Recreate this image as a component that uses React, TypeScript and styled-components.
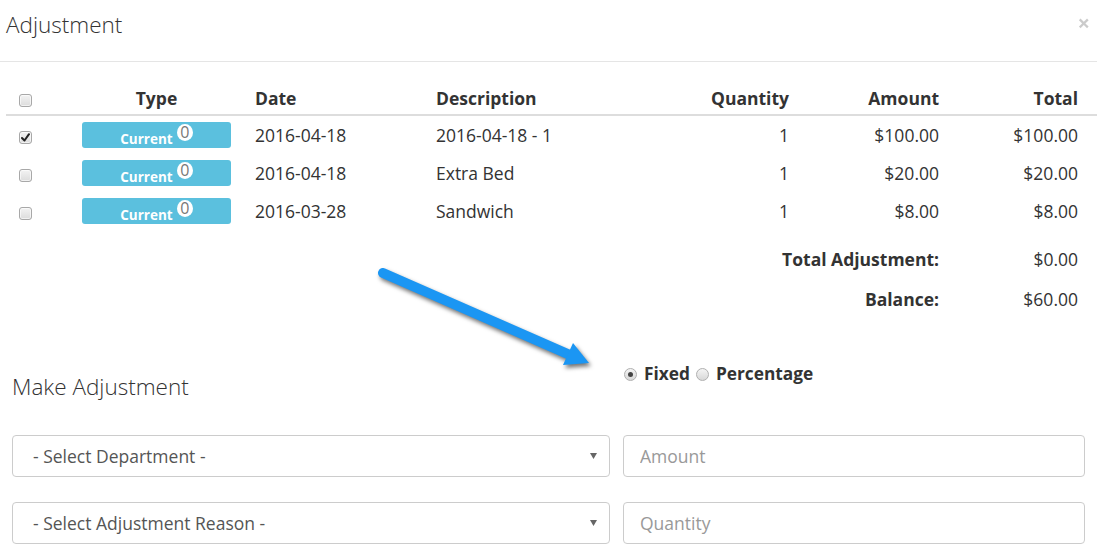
import React from "react";
import styled, { createGlobalStyle } from "styled-components";

const GlobalStyle = createGlobalStyle`
  html, body {
    margin: 0;
    padding: 0;
    background: #fff;
  }
  body {
    font-family: "Open Sans", "Liberation Sans", sans-serif;
    color: #333;
    font-size: 17.5px;
  }
  * { box-sizing: border-box; }
`;

const Page = styled.div`
  position: relative;
  width: 1097px;
  height: 553px;
  overflow: hidden;
`;

const Header = styled.div`
  height: 62px;
  border-bottom: 1px solid #e5e5e5;
  display: flex;
  align-items: flex-start;
  justify-content: space-between;
  padding: 10px 7px 0 6px;
`;

const Title = styled.h4`
  margin: 0;
  font-weight: 300;
  font-size: 22.5px;
  line-height: 30px;
  color: #333;
`;

const Close = styled.button`
  border: 0;
  background: transparent;
  padding: 0;
  margin-top: 1px;
  font-family: "Open Sans", "Liberation Sans", sans-serif;
  font-size: 22px;
  font-weight: 700;
  line-height: 22px;
  color: #000;
  opacity: 0.2;
  cursor: pointer;
`;

const Table = styled.table`
  margin: 19px 0 0 6px;
  width: 1091px;
  table-layout: fixed;
  border-collapse: collapse;
`;

type Align = "left" | "right" | "center";

const Th = styled.th<{ $align?: Align; $pl?: number; $pr?: number }>`
  padding: 6px ${(p) => p.$pr ?? 8}px 5px ${(p) => p.$pl ?? 8}px;
  line-height: 22px;
  font-size: 17.5px;
  font-weight: 700;
  text-align: ${(p) => p.$align ?? "left"};
  border-bottom: 2px solid #ddd;
  vertical-align: middle;
  color: #333;
  white-space: nowrap;
`;

const Td = styled.td<{ $align?: Align; $pl?: number; $pr?: number; $bold?: boolean; $pt?: number }>`
  padding: ${(p) => p.$pt ?? 6}px ${(p) => p.$pr ?? 8}px 6px ${(p) => p.$pl ?? 8}px;
  height: 38px;
  line-height: 26px;
  font-size: 17.5px;
  font-weight: ${(p) => (p.$bold ? 700 : 400)};
  text-align: ${(p) => p.$align ?? "left"};
  vertical-align: middle;
  color: #333;
  white-space: nowrap;
`;

const FootTd = styled(Td)`
  height: auto;
  line-height: 22px;
  padding-bottom: 9px;
`;

const CheckBox = styled.span<{ $checked?: boolean }>`
  display: inline-flex;
  align-items: center;
  justify-content: center;
  width: 13px;
  height: 13px;
  border: 1px solid #a8a8a8;
  border-radius: 3px;
  background: linear-gradient(#f3f3f3, #dcdcdc);
  vertical-align: middle;
  box-shadow: inset 0 0 0 1px rgba(255, 255, 255, 0.6);
`;

const Badge = styled.span`
  display: flex;
  align-items: center;
  justify-content: center;
  gap: 4px;
  width: 149px;
  height: 26px;
  background: #5bc0de;
  border-radius: 3px;
  color: #fff;
`;

const BadgeLabel = styled.span`
  font-size: 13.5px;
  font-weight: 700;
  line-height: 16px;
  margin-top: 7px;
`;

const Counter = styled.span`
  display: inline-flex;
  align-items: center;
  justify-content: center;
  width: 16px;
  height: 17px;
  border-radius: 50%;
  background: #fff;
  color: #777;
  font-size: 16px;
  line-height: 17px;
  margin-top: -5px;
`;

const Section = styled.div`
  display: grid;
  grid-template-columns: 598px 462px;
  column-gap: 13px;
  padding-left: 12px;
`;

const TopRow = styled(Section)`
  margin-top: 43px;
  align-items: start;
`;

const FieldRows = styled(Section)`
  margin-top: 33px;
  row-gap: 25px;
`;

const SubTitle = styled.h4`
  margin: 10px 0 0;
  font-weight: 300;
  font-size: 22.5px;
  line-height: 30px;
  color: #333;
`;

const RadioGroup = styled.div`
  display: flex;
  align-items: center;
  height: 24px;
  padding-left: 1px;
`;

const RadioLabel = styled.label`
  display: inline-flex;
  align-items: center;
  gap: 7px;
  margin-right: 6px;
  font-size: 17.3px;
  font-weight: 700;
  line-height: 24px;
  color: #333;
`;

const RadioDot = styled.span<{ $checked?: boolean }>`
  display: inline-flex;
  align-items: center;
  justify-content: center;
  width: 13px;
  height: 13px;
  border-radius: 50%;
  border: 1px solid #b0b0b0;
  background: linear-gradient(#f4f4f4, #d8d8d8);
  &::after {
    content: "";
    display: ${(p) => (p.$checked ? "block" : "none")};
    width: 5px;
    height: 5px;
    border-radius: 50%;
    background: #444;
  }
`;

const SelectBox = styled.div`
  display: flex;
  align-items: center;
  justify-content: space-between;
  height: 42px;
  border: 1px solid #ccc;
  border-radius: 4px;
  padding: 0 12px 0 20px;
  font-size: 17.5px;
  color: #555;
  background: #fff;
`;

const Input = styled.input`
  height: 42px;
  width: 100%;
  border: 1px solid #ccc;
  border-radius: 4px;
  padding: 0 16px;
  font-family: "Open Sans", "Liberation Sans", sans-serif;
  font-size: 17.5px;
  color: #555;
  outline: none;
  &::placeholder {
    color: #999;
  }
`;

const ArrowOverlay = styled.svg`
  position: absolute;
  left: 370px;
  top: 255px;
  overflow: visible;
  filter: drop-shadow(2px 3px 2px rgba(0, 0, 0, 0.55));
`;

const Check = () => (
  <svg width="9" height="9" viewBox="0 0 9 9">
    <path d="M1 5 L3.5 7.5 L8 1.2" fill="none" stroke="#222" strokeWidth="2" strokeLinecap="round" strokeLinejoin="round" />
  </svg>
);

const Caret = () => (
  <svg width="7" height="6" viewBox="0 0 7 6">
    <path d="M0 0 H7 L3.5 6 Z" fill="#666" />
  </svg>
);

const rows = [
  { checked: true, date: "2016-04-18", desc: "2016-04-18 - 1", qty: "1", amount: "$100.00", total: "$100.00" },
  { checked: false, date: "2016-04-18", desc: "Extra Bed", qty: "1", amount: "$20.00", total: "$20.00" },
  { checked: false, date: "2016-03-28", desc: "Sandwich", qty: "1", amount: "$8.00", total: "$8.00" },
];

export default function App() {
  return (
    <Page>
      <GlobalStyle />
      <Header>
        <Title>Adjustment</Title>
        <Close aria-label="Close">×</Close>
      </Header>

      <Table>
        <colgroup>
          <col style={{ width: 68 }} />
          <col style={{ width: 173 }} />
          <col style={{ width: 181 }} />
          <col style={{ width: 222 }} />
          <col style={{ width: 147 }} />
          <col style={{ width: 150 }} />
          <col style={{ width: 150 }} />
        </colgroup>
        <thead>
          <tr>
            <Th $pl={13}>
              <CheckBox />
            </Th>
            <Th $align="center" $pr={16}>Type</Th>
            <Th>Date</Th>
            <Th>Description</Th>
            <Th $align="right">Quantity</Th>
            <Th $align="right">Amount</Th>
            <Th $align="right" $pr={19}>Total</Th>
          </tr>
        </thead>
        <tbody>
          {rows.map((r, i) => (
            <tr key={i}>
              <Td $pl={13}>
                <CheckBox $checked={r.checked}>{r.checked && <Check />}</CheckBox>
              </Td>
              <Td $pr={16}>
                <Badge>
                  <BadgeLabel>Current</BadgeLabel>
                  <Counter>0</Counter>
                </Badge>
              </Td>
              <Td>{r.date}</Td>
              <Td>{r.desc}</Td>
              <Td $align="right">{r.qty}</Td>
              <Td $align="right">{r.amount}</Td>
              <Td $align="right" $pr={19}>{r.total}</Td>
            </tr>
          ))}
        </tbody>
        <tfoot>
          <tr>
            <FootTd colSpan={6} $align="right" $bold $pt={18}>Total Adjustment:</FootTd>
            <FootTd $align="right" $pr={19} $pt={18}>$0.00</FootTd>
          </tr>
          <tr>
            <FootTd colSpan={6} $align="right" $bold $pt={9}>Balance:</FootTd>
            <FootTd $align="right" $pr={19} $pt={9}>$60.00</FootTd>
          </tr>
        </tfoot>
      </Table>

      <TopRow>
        <SubTitle>Make Adjustment</SubTitle>
        <RadioGroup>
          <RadioLabel>
            <RadioDot $checked />
            Fixed
          </RadioLabel>
          <RadioLabel>
            <RadioDot />
            Percentage
          </RadioLabel>
        </RadioGroup>
      </TopRow>

      <FieldRows>
        <SelectBox>
          <span>- Select Department -</span>
          <Caret />
        </SelectBox>
        <Input placeholder="Amount" />
        <SelectBox>
          <span>- Select Adjustment Reason -</span>
          <Caret />
        </SelectBox>
        <Input placeholder="Quantity" />
      </FieldRows>

      <ArrowOverlay width="240" height="125" viewBox="0 0 240 125">
        <line x1="13" y1="18" x2="200" y2="100" stroke="#1b96f3" strokeWidth="10" strokeLinecap="round" />
        <polygon points="219,108 203,88 193,110" fill="#1b96f3" />
      </ArrowOverlay>
    </Page>
  );
}
